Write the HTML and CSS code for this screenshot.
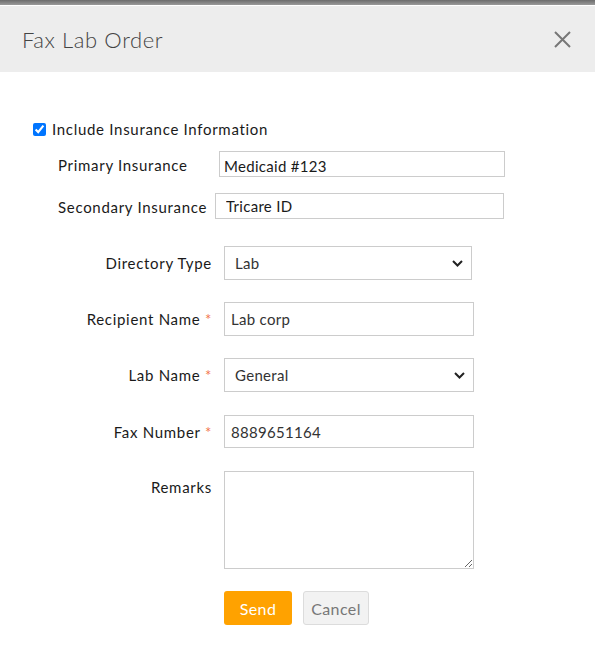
FILE: index.html
```html
<!DOCTYPE html>
<html lang="en">
<head>
    <meta charset="UTF-8">
    <meta name="viewport" content="width=device-width, initial-scale=1.0">
    <title>Fax Lab Order</title>
    <link rel="stylesheet" href="styles.css">
</head>
<body>
    <div class="topbar"></div>

    <div class="modal-header">
        <h3>Fax Lab Order</h3>
        <button class="modal-close" aria-label="Close">
            <svg width="17" height="17" viewBox="0 0 17 17">
                <path d="M1 1 L16 16 M16 1 L1 16" stroke="#777" stroke-width="2" fill="none"/>
            </svg>
        </button>
    </div>

    <div class="modal-body">
        <label class="check-row">
            <input type="checkbox" checked>
            <span>Include Insurance Information</span>
        </label>

        <div class="ins-row">
            <label class="ins-label primary">Primary Insurance</label>
            <input type="text" class="ins-input primary" value="Medicaid #123">
        </div>
        <div class="ins-row secondary">
            <label class="ins-label">Secondary Insurance</label>
            <input type="text" class="ins-input secondary" value="Tricare ID">
        </div>

        <div class="form-grid">
            <label class="form-label">Directory Type</label>
            <div class="select-wrap narrow">
                <select class="form-control select">
                    <option>Lab</option>
                </select>
                <svg class="chevron" width="11" height="7" viewBox="0 0 11 7">
                    <path d="M1 1 L5.5 5.5 L10 1" stroke="#222" stroke-width="2" fill="none"/>
                </svg>
            </div>

            <label class="form-label">Recipient Name <span class="req">*</span></label>
            <input type="text" class="form-control" value="Lab corp">

            <label class="form-label">Lab Name <span class="req">*</span></label>
            <div class="select-wrap">
                <select class="form-control select">
                    <option>General</option>
                </select>
                <svg class="chevron" width="11" height="7" viewBox="0 0 11 7">
                    <path d="M1 1 L5.5 5.5 L10 1" stroke="#222" stroke-width="2" fill="none"/>
                </svg>
            </div>

            <label class="form-label fax-label">Fax Number <span class="req">*</span></label>
            <input type="text" class="form-control fax" value="8889651164">

            <label class="form-label">Remarks</label>
            <textarea class="form-control remarks"></textarea>

            <div></div>
            <div class="actions">
                <button class="btn btn-send">Send</button>
                <button class="btn btn-cancel">Cancel</button>
            </div>
        </div>
    </div>
</body>
</html>
```

FILE: styles.css
```css
body {
    font-family: Lato, "Open Sans", sans-serif;
    margin: 0;
    background: #fff;
    color: #1a1a1a;
}

.topbar {
    height: 5px;
    background: linear-gradient(to bottom, #6c6c6c, #9a9a9a);
    border-bottom: 1px solid #fff;
}

.modal-header {
    height: 66px;
    background-color: #ededed;
    display: flex;
    justify-content: space-between;
    align-items: center;
    padding: 0 24px 0 22px;
}

.modal-header h3 {
    margin: 0;
    font-size: 22px;
    font-weight: 300;
    letter-spacing: 0.6px;
    color: #444;
}

.modal-close {
    background: none;
    border: none;
    padding: 0;
    display: flex;
    cursor: pointer;
}

.modal-body {
    padding: 47px 0 30px 0;
}

.check-row {
    display: flex;
    align-items: center;
    gap: 6px;
    margin-left: 33px;
    height: 20px;
    font-size: 15px;
    letter-spacing: 0.7px;
}

.check-row input {
    margin: 0;
    width: 13px;
    height: 13px;
    accent-color: #0075ff;
}

.ins-row {
    display: flex;
    align-items: center;
    margin: 12px 0 0 58px;
    font-size: 15px;
    letter-spacing: 0.7px;
}

.ins-row.secondary {
    margin-top: 16px;
}

.ins-label {
    width: 157px;
    padding-top: 2px;
}

.ins-label.primary {
    width: 161px;
}

.ins-input {
    height: 26px;
    border: 1px solid #ccc;
    padding: 0 4px;
    box-sizing: border-box;
    font-family: inherit;
    font-size: 15px;
    letter-spacing: 0.3px;
    color: #1a1a1a;
}

.ins-input.primary {
    width: 286px;
    padding-top: 3px;
}

.ins-input.secondary {
    width: 289px;
    padding-left: 10px;
}

.form-grid {
    display: grid;
    grid-template-columns: 150px 250px;
    column-gap: 12px;
    row-gap: 22px;
    margin: 27px 0 0 62px;
}

.form-label {
    text-align: right;
    font-size: 15px;
    letter-spacing: 0.7px;
    padding-top: 8px;
    line-height: 18px;
}

.req {
    color: #f2764a;
}

.form-control {
    width: 100%;
    height: 34px;
    border: 1px solid #ccc;
    box-sizing: border-box;
    padding: 0 6px;
    font-family: inherit;
    font-size: 15px;
    letter-spacing: 0.3px;
    color: #333;
    background: #fff;
}

.select-wrap {
    position: relative;
}

.select-wrap.narrow {
    width: 248px;
}

.select {
    appearance: none;
    padding-left: 10px;
    border-radius: 0;
}

.chevron {
    position: absolute;
    right: 9px;
    top: 14px;
    pointer-events: none;
}

.fax,
.fax-label {
    margin-top: 1px;
}

.fax {
    height: 33px;
}

.remarks {
    height: 98px;
    resize: vertical;
    margin-top: 1px;
}

.actions {
    display: flex;
    gap: 11px;
}

.btn {
    height: 34px;
    border-radius: 3px;
    font-family: inherit;
    font-size: 16px;
    letter-spacing: 0.4px;
    cursor: pointer;
}

.btn-send {
    width: 68px;
    background-color: #ffa200;
    border: none;
    color: #fff;
}

.btn-cancel {
    width: 66px;
    background-color: #f2f2f2;
    border: 1px solid #dcdcdc;
    color: #777;
}
```
